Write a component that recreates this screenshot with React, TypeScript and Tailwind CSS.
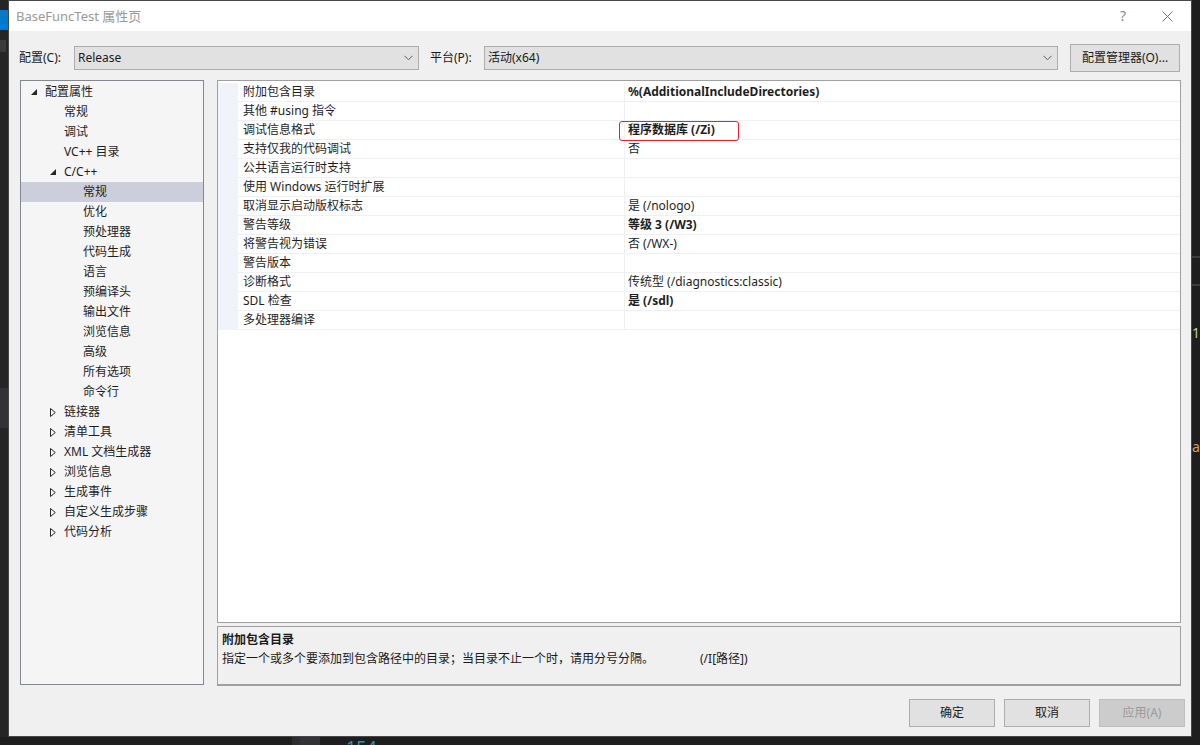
import React from 'react';

type TreeItem = { label: string; depth: number; toggle?: 'open' | 'closed'; selected?: boolean };
type PropRow = { name: string; value?: string; bold?: boolean; marked?: boolean };

const TREE: TreeItem[] = [
  { label: '配置属性', depth: 0, toggle: 'open' },
  { label: '常规', depth: 1 },
  { label: '调试', depth: 1 },
  { label: 'VC++ 目录', depth: 1 },
  { label: 'C/C++', depth: 1, toggle: 'open' },
  { label: '常规', depth: 2, selected: true },
  { label: '优化', depth: 2 },
  { label: '预处理器', depth: 2 },
  { label: '代码生成', depth: 2 },
  { label: '语言', depth: 2 },
  { label: '预编译头', depth: 2 },
  { label: '输出文件', depth: 2 },
  { label: '浏览信息', depth: 2 },
  { label: '高级', depth: 2 },
  { label: '所有选项', depth: 2 },
  { label: '命令行', depth: 2 },
  { label: '链接器', depth: 1, toggle: 'closed' },
  { label: '清单工具', depth: 1, toggle: 'closed' },
  { label: 'XML 文档生成器', depth: 1, toggle: 'closed' },
  { label: '浏览信息', depth: 1, toggle: 'closed' },
  { label: '生成事件', depth: 1, toggle: 'closed' },
  { label: '自定义生成步骤', depth: 1, toggle: 'closed' },
  { label: '代码分析', depth: 1, toggle: 'closed' },
];

const ROWS: PropRow[] = [
  { name: '附加包含目录', value: '%(AdditionalIncludeDirectories)', bold: true },
  { name: '其他 #using 指令' },
  { name: '调试信息格式', value: '程序数据库 (/Zi)', bold: true, marked: true },
  { name: '支持仅我的代码调试', value: '否' },
  { name: '公共语言运行时支持' },
  { name: '使用 Windows 运行时扩展' },
  { name: '取消显示启动版权标志', value: '是 (/nologo)' },
  { name: '警告等级', value: '等级 3 (/W3)', bold: true },
  { name: '将警告视为错误', value: '否 (/WX-)' },
  { name: '警告版本' },
  { name: '诊断格式', value: '传统型 (/diagnostics:classic)' },
  { name: 'SDL 检查', value: '是 (/sdl)', bold: true },
  { name: '多处理器编译' },
];

const indent = ['pl-[10px]', 'pl-[29px]', 'pl-[48px]'];

const Chevron = () => (
  <svg width="9" height="6" viewBox="0 0 9 6" className="shrink-0">
    <path d="M0.5 0.8 L4.5 4.8 L8.5 0.8" fill="none" stroke="#606060" strokeWidth="1" />
  </svg>
);

const Toggle = ({ kind }: { kind?: 'open' | 'closed' }) => (
  <span className="w-[14px] h-[20px] flex items-center shrink-0">
    {kind === 'open' && (
      <svg width="6" height="6" viewBox="0 0 6 6">
        <path d="M6 0 L6 6 L0 6 Z" fill="#262626" />
      </svg>
    )}
    {kind === 'closed' && (
      <svg width="6" height="9" viewBox="0 0 6 9">
        <path d="M0.5 0.5 L5.3 4.5 L0.5 8.5 Z" fill="none" stroke="#262626" strokeWidth="1" />
      </svg>
    )}
  </span>
);

const Button = ({ label, disabled }: { label: string; disabled?: boolean }) => (
  <div
    className={`w-[86px] h-[28px] flex items-center justify-center border text-[12px] leading-none ${
      disabled ? 'bg-[#cccccc] border-[#bfbfbf] text-[#9a9a9a]' : 'bg-[#e1e1e1] border-[#adadad] text-[#1a1a1a]'
    }`}
  >
    {label}
  </div>
);

export default function App() {
  return (
    <div className="w-[1200px] h-[745px] bg-[#1e1e1e] flex flex-col overflow-hidden font-['Noto_Sans','Noto_Sans_CJK_SC',sans-serif]">
      <div className="flex h-[737px]">
        {/* editor behind, left edge */}
        <div className="w-[8px] bg-[#252526] flex flex-col">
          <div className="h-[10px]" />
          <div className="h-[20px] bg-[#007acc]" />
          <div className="h-[10px]" />
          <div className="h-[12px] bg-[#3a3a3a] w-[6px]" />
          <div className="h-[336px]" />
          <div className="h-[40px] bg-[#333337]" />
        </div>

        {/* dialog */}
        <div className="w-[1184px] flex flex-col border border-[#474747] bg-[#f0f0f0]">
          {/* title bar */}
          <div className="h-[30px] bg-white flex items-center pl-[7px] pr-[16px] shrink-0">
            <span className="text-[13px] text-[#999999] leading-none">BaseFuncTest 属性页</span>
            <div className="flex-1" />
            <span className="text-[14px] text-[#8a8a8a] leading-none mr-[36px]">?</span>
            <svg width="11" height="11" viewBox="0 0 11 11" className="mr-[2px]">
              <path d="M0.5 0.5 L10.5 10.5 M10.5 0.5 L0.5 10.5" stroke="#777777" strokeWidth="1" />
            </svg>
          </div>

          {/* config row */}
          <div className="flex items-center h-[28px] mt-[13px] pl-[10px] pr-[11px] text-[12px] text-[#1a1a1a]">
            <span className="w-[55px] leading-none">配置(C):</span>
            <div className="w-[345px] h-[24px] bg-[#e1e1e1] border border-[#adadad] flex items-center pl-[3px] pr-[5px]">
              <span className="flex-1 leading-none">Release</span>
              <Chevron />
            </div>
            <span className="ml-[11px] w-[54px] leading-none">平台(P):</span>
            <div className="w-[574px] h-[24px] bg-[#e1e1e1] border border-[#adadad] flex items-center pl-[3px] pr-[5px]">
              <span className="flex-1 leading-none">活动(x64)</span>
              <Chevron />
            </div>
            <div className="ml-[12px] w-[110px] h-[28px] bg-[#e1e1e1] border border-[#adadad] flex items-center justify-center leading-none">
              配置管理器(O)...
            </div>
          </div>

          {/* main area */}
          <div className="flex mt-[8px] pl-[11px] pr-[10px] gap-[13px]">
            {/* tree */}
            <div className="w-[184px] h-[605px] bg-[#f5f5f5] border border-[#828790] pt-[1px] text-[12px] text-[#1e1e1e]">
              {TREE.map((item, i) => (
                <div
                  key={i}
                  className={`h-[20px] flex items-center ${indent[item.depth]} ${item.selected ? 'bg-[#cccedb]' : ''}`}
                >
                  <Toggle kind={item.toggle} />
                  <span className="leading-none whitespace-nowrap">{item.label}</span>
                </div>
              ))}
            </div>

            {/* right column */}
            <div className="w-[964px] flex flex-col gap-[3px]">
              <div className="h-[543px] bg-white border border-[#a0a0a0] pt-[2px] text-[12px] text-[#1e1e1e]">
                {ROWS.map((row, i) => (
                  <div key={i} className="h-[19px] flex">
                    <div className="w-[20px] bg-[#f0f3f9]" />
                    <div className="w-[387px] pl-[5px] flex items-center border-b border-[#eef0f5] border-r border-r-[#f0f0f0]">
                      <span className="leading-none whitespace-nowrap">{row.name}</span>
                    </div>
                    <div className="flex-1 pl-[3px] flex items-center border-b border-[#eef0f5] relative">
                      {row.value && (
                        <span className={`leading-none whitespace-nowrap ${row.bold ? 'font-bold' : ''}`}>{row.value}</span>
                      )}
                      {row.marked && (
                        <div className="absolute left-[-6px] top-0 w-[120px] h-[20px] border border-[#e8242b] rounded-[3px]" />
                      )}
                    </div>
                  </div>
                ))}
              </div>

              {/* description */}
              <div className="h-[60px] bg-[#f0f0f0] border border-[#a0a0a0] border-b-2 pl-[4px] pt-[3px] text-[12px] text-[#1a1a1a]">
                <div className="h-[19px] flex items-center font-bold leading-none">附加包含目录</div>
                <div className="h-[19px] flex items-center leading-none whitespace-nowrap">
                  <span>指定一个或多个要添加到包含路径中的目录；当目录不止一个时，请用分号分隔。</span>
                  <span className="ml-[46px]">(/I[路径])</span>
                </div>
              </div>
            </div>
          </div>

          {/* buttons */}
          <div className="flex justify-end gap-[9px] mt-[13px] pr-[6px]">
            <Button label="确定" />
            <Button label="取消" />
            <Button label="应用(A)" disabled />
          </div>
        </div>

        {/* editor behind, right edge */}
        <div className="w-[8px] bg-[#1e1e1e] flex flex-col">
          <div className="h-[256px]" />
          <div className="h-[2px] bg-[#3c3c3c]" />
          <div className="h-[26px]" />
          <div className="h-[2px] bg-[#3c3c3c]" />
          <div className="h-[40px]" />
          <div className="text-[14px] leading-none text-[#b5cea8] overflow-hidden">10</div>
          <div className="h-[100px]" />
          <div className="text-[14px] leading-none text-[#d69d56] overflow-hidden">a</div>
        </div>
      </div>

      {/* editor behind, bottom edge */}
      <div className="h-[8px] flex">
        <div className="w-[292px]" />
        <div className="w-[8px] bg-[#2d2d30]" />
        <div className="w-[20px] bg-[#333337]" />
        <div className="w-[26px]" />
        <div className="text-[18px] leading-none text-[#2b91af] pt-[1px] overflow-hidden h-[8px]">154</div>
      </div>
    </div>
  );
}
